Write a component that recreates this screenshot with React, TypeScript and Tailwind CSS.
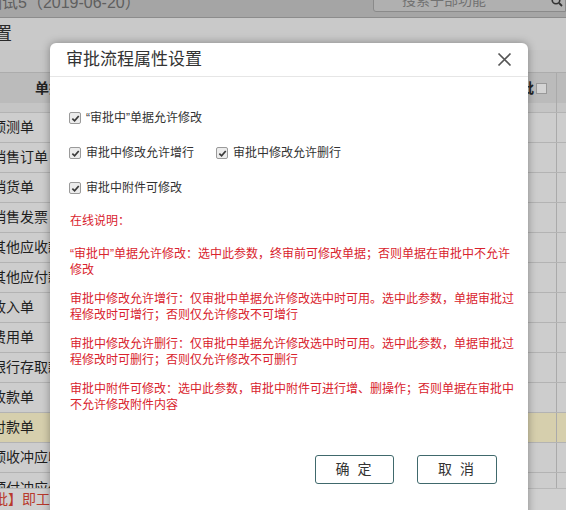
import React from 'react';

const rows = [
  '预测单',
  '销售订单',
  '销货单',
  '销售发票',
  '其他应收款',
  '其他应付款',
  '收入单',
  '费用单',
  '银行存取款',
  '收款单',
  '付款单',
  '预收冲应收',
];

const notes = [
  '“审批中”单据允许修改：选中此参数，终审前可修改单据；否则单据在审批中不允许修改',
  '审批中修改允许增行：仅审批中单据允许修改选中时可用。选中此参数，单据审批过程修改时可增行；否则仅允许修改不可增行',
  '审批中修改允许删行：仅审批中单据允许修改选中时可用。选中此参数，单据审批过程修改时可删行；否则仅允许修改不可删行',
  '审批中附件可修改：选中此参数，审批中附件可进行增、删操作；否则单据在审批中不允许修改附件内容',
];

function Check({ label }: { label: string }) {
  return (
    <label className="flex items-center gap-[5px] h-[16px] text-[12px] text-[#333]">
      <span className="w-[12px] h-[12px] rounded-[2px] border border-[#9a9a9a] bg-[#ececec] flex items-center justify-center">
        <svg width="9" height="9" viewBox="0 0 10 10">
          <path d="M1.5 5.2 L4 7.6 L8.6 2.2" fill="none" stroke="#3a3a3a" strokeWidth="1.9" />
        </svg>
      </span>
      <span>{label}</span>
    </label>
  );
}

function Background() {
  return (
    <div className="flex flex-col w-full h-full bg-[#cdcdcd]">
      {/* top bar */}
      <div className="h-[18px] shrink-0 bg-[#a5a5a5] border-b border-[#8c8c8c] flex justify-between overflow-hidden">
        <span className="ml-[-14px] mt-[-7px] text-[16px] leading-[20px] text-[#5f5f5f] whitespace-nowrap">
          测试5（2019-06-20）
        </span>
        <div className="w-[193px] h-[14px] mt-[-2px] rounded-bl-[3px] border border-[#8a8a8a] bg-[#b0b0b0] flex items-center justify-between pl-[28px] pr-[2px] overflow-hidden">
          <span className="mt-[-10px] text-[14px] text-[#727272] whitespace-nowrap">搜索子部功能</span>
          <svg width="12" height="12" viewBox="0 0 12 12" className="mt-[-8px]">
            <circle cx="5" cy="5" r="3.8" fill="none" stroke="#333" strokeWidth="1.6" />
            <path d="M8 8 L11 11" stroke="#333" strokeWidth="1.8" />
          </svg>
        </div>
      </div>
      {/* page title bar */}
      <div className="h-[32px] shrink-0 bg-[#c9c9c9] flex items-center overflow-hidden">
        <span className="ml-[-6px] text-[18px] text-[#2b2b2b]">置</span>
      </div>
      <div className="h-[23px] shrink-0 bg-[#c6c6c6] border-b border-[#acacac]" />
      {/* table header */}
      <div className="h-[30px] shrink-0 bg-[#bbbbbb] flex items-center text-[14px] font-bold text-[#222]">
        <span className="ml-[35px] flex-1">单据</span>
        <span className="mr-[2px]">批</span>
        <span className="w-[11px] h-[11px] border border-[#999] bg-[#d4d4d4] mr-[9px]" />
        <span className="w-[10px] h-full border-l border-[#aaaaaa]" />
      </div>
      <div className="h-[10px] shrink-0 bg-[#c5c5c5] border-b border-[#b3b3b3] flex justify-end">
        <span className="w-[10px] h-full border-l border-[#aaaaaa]" />
      </div>
      {rows.map((r) => (
        <div
          key={r}
          className={`h-[30px] shrink-0 border-b border-[#b3b3b3] flex items-center text-[14px] text-[#1e1e1e] ${
            r === '付款单' ? 'bg-[#d6cfad]' : 'bg-[#cdcdcd]'
          }`}
        >
          <span className="ml-[-8px] flex-1 whitespace-nowrap">{r}</span>
          <span className="w-[10px] h-full border-l border-[#aaaaaa]" />
        </div>
      ))}
      <div className="h-[15px] shrink-0 overflow-hidden flex bg-[#cdcdcd]">
        <span className="ml-[-8px] flex-1 text-[14px] leading-[30px] text-[#1e1e1e] whitespace-nowrap">预付冲应付</span>
        <span className="w-[10px] h-full border-l border-[#aaaaaa]" />
      </div>
      <div className="flex-1 bg-[#d0d0d0] border-t border-[#b8b8b8] flex items-center overflow-hidden">
        <span className="ml-[-6px] text-[14px] text-[#b8392c] whitespace-nowrap">批】即工作流程</span>
      </div>
    </div>
  );
}

export default function App() {
  return (
    <div className="relative w-[566px] h-[510px] overflow-hidden font-['Liberation_Sans','Noto_Sans_CJK_SC',sans-serif]">
      <Background />

      {/* dialog */}
      <div className="absolute left-[50px] top-[43px] w-[478px] h-[500px] bg-white rounded-t-[6px] shadow-[0_0_8px_rgba(0,0,0,0.35)] flex flex-col">
        <div className="h-[34px] shrink-0 border-b border-[#e6e6e6] flex items-center justify-between pl-[16px] pr-[16px]">
          <span className="text-[17px] text-[#333] mt-[1px]">审批流程属性设置</span>
          <svg width="15" height="15" viewBox="0 0 15 15">
            <path d="M1.5 1.5 L13.5 13.5 M13.5 1.5 L1.5 13.5" stroke="#555" strokeWidth="1.7" />
          </svg>
        </div>

        <div className="pl-[19px] pt-[33px] flex flex-col gap-[19px]">
          <Check label="“审批中”单据允许修改" />
          <div className="flex gap-[22px]">
            <Check label="审批中修改允许增行" />
            <Check label="审批中修改允许删行" />
          </div>
          <Check label="审批中附件可修改" />
        </div>

        <div className="pl-[20px] mt-[17px] w-[466px] text-[12px] leading-[16px] text-[#d9232d]">
          <p>在线说明：</p>
          <div className="mt-[17px] flex flex-col gap-[13px]">
            {notes.map((n) => (
              <p key={n}>{n}</p>
            ))}
          </div>
        </div>

        <div className="mt-[42px] flex justify-end gap-[23px] pr-[31px]">
          <button className="w-[79px] h-[29px] rounded-[3px] border border-[#40696c] text-[14px] text-[#333] tracking-[2px]">
            确 定
          </button>
          <button className="w-[80px] h-[29px] rounded-[3px] border border-[#40696c] text-[14px] text-[#333] tracking-[2px]">
            取 消
          </button>
        </div>
      </div>
    </div>
  );
}
